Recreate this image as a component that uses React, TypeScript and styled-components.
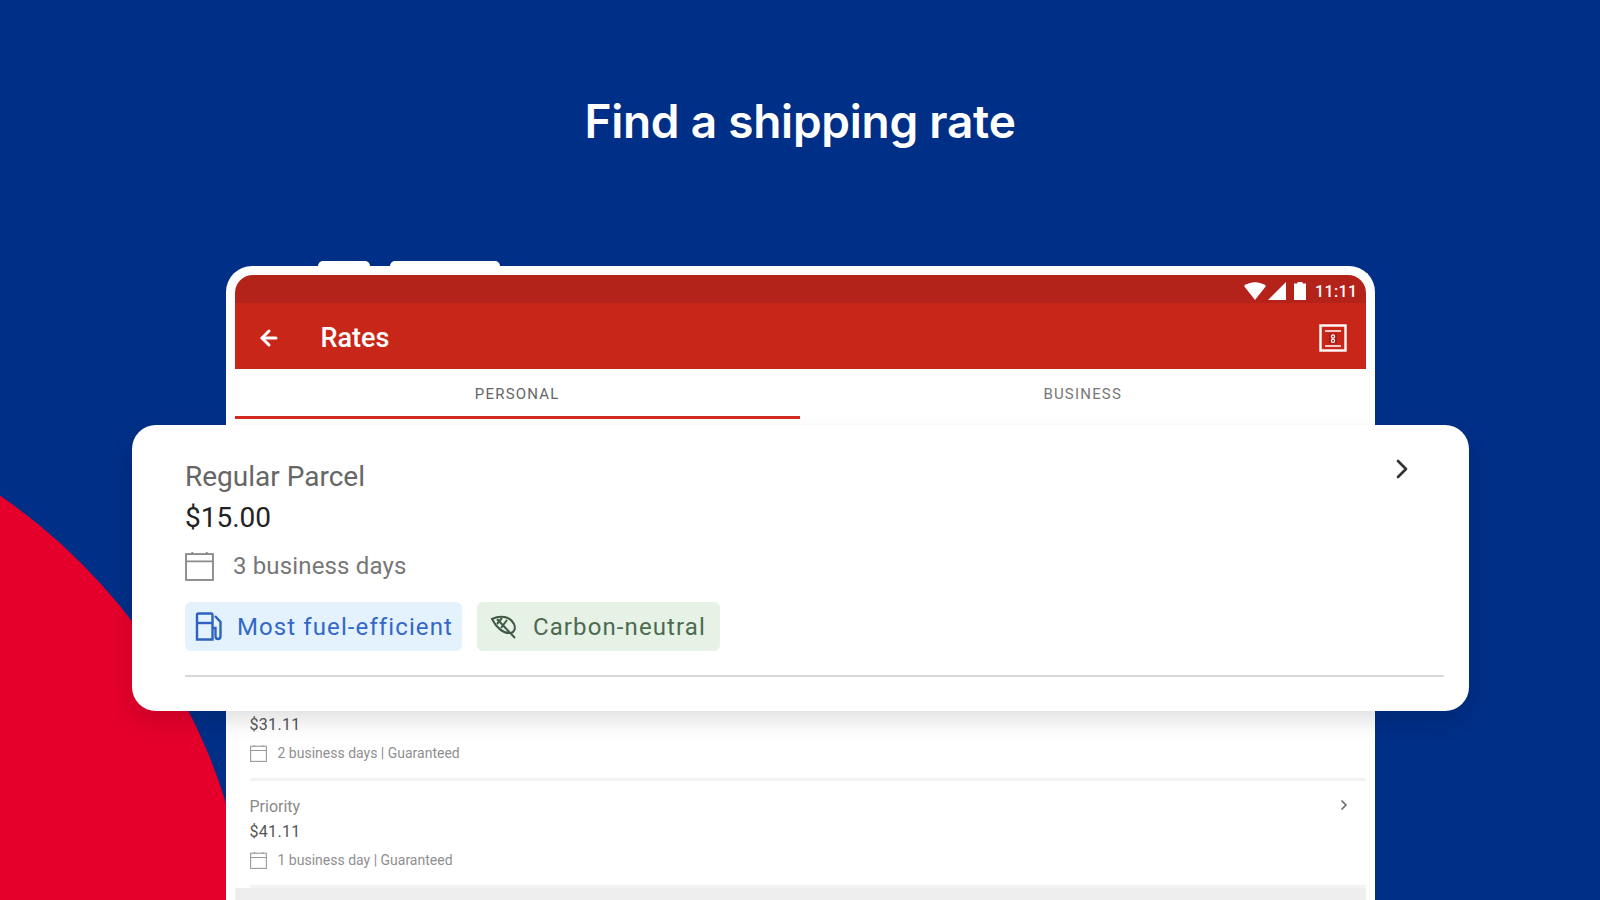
import React from 'react';
import styled, { createGlobalStyle } from 'styled-components';
import { ArrowLeft, ChevronRight } from 'lucide-react';

const GlobalStyle = createGlobalStyle`
  html, body {
    margin: 0;
    padding: 0;
  }
  body {
    font-family: Roboto, "Liberation Sans", sans-serif;
    background: #002f87;
  }
`;

const Page = styled.div`
  position: relative;
  width: 1600px;
  height: 900px;
  overflow: hidden;
  background: #002f87;
`;

const RedCircle = styled.div`
  position: absolute;
  left: -912px;
  top: 393px;
  width: 1164px;
  height: 1164px;
  border-radius: 50%;
  background: #e4002b;
`;

const Title = styled.h1`
  position: relative;
  margin: 0;
  padding-top: 91px;
  height: 266px;
  box-sizing: border-box;
  text-align: center;
  font-family: Inter, "Open Sans", sans-serif;
  font-size: 46px;
  font-weight: 600;
  line-height: 60px;
  letter-spacing: -0.25px;
  color: #fff;
`;

const Tablet = styled.div`
  position: relative;
  width: 1149px;
  height: 634px;
  margin: 0 auto;
  box-sizing: border-box;
  border: 9px solid #fff;
  border-bottom: 0;
  border-radius: 26px 26px 0 0;
  background: #fff;
`;

const HardwareButton = styled.span<{ $left: number; $width: number }>`
  position: absolute;
  top: -14px;
  left: ${p => p.$left}px;
  width: ${p => p.$width}px;
  height: 6px;
  border-radius: 5px 5px 0 0;
  background: #fff;
`;

const Screen = styled.div`
  height: 100%;
  overflow: hidden;
  border-radius: 18px 18px 0 0;
  background: #fff;
`;

const StatusBar = styled.div`
  height: 28px;
  box-sizing: border-box;
  padding: 4px 8px 0 0;
  display: flex;
  align-items: center;
  justify-content: flex-end;
  background: #b3231a;
`;

const StatusTime = styled.span`
  margin-left: 9px;
  font-size: 16px;
  font-weight: 500;
  letter-spacing: 0.4px;
  color: #fff;
`;

const Toolbar = styled.div`
  height: 66px;
  box-sizing: border-box;
  padding: 3px 19px 0 22px;
  display: flex;
  align-items: center;
  background: #c9261a;
  color: #fff;
`;

const ToolbarTitle = styled.span`
  margin-left: 40px;
  flex: 1;
  font-size: 27px;
  font-weight: 500;
`;

const Tabs = styled.div`
  display: flex;
  height: 50px;
`;

const Tab = styled.div<{ $active?: boolean }>`
  flex: 1;
  padding-top: 16px;
  box-sizing: border-box;
  text-align: center;
  font-size: 15px;
  letter-spacing: 1.2px;
  color: ${p => (p.$active ? '#666' : '#777')};
  border-bottom: 3px solid ${p => (p.$active ? '#d32a22' : 'transparent')};
`;

const RateList = styled.div`
  padding: 255px 0 0 15px;
`;

const RateRow = styled.div`
  position: relative;
  height: 90px;
  padding-top: 14px;
  border-bottom: 3px solid #f3f3f3;
`;

const RowLabel = styled.div`
  height: 24px;
  font-size: 16px;
  line-height: 24px;
  color: #8a8a8a;
`;

const RowPrice = styled.div`
  height: 26px;
  font-size: 16px;
  line-height: 26px;
  letter-spacing: 0.3px;
  color: #555;
`;

const RowMeta = styled.div`
  display: flex;
  align-items: center;
  gap: 11px;
  height: 30px;
  font-size: 14px;
  color: #8f8f8f;
`;

const RowChevron = styled.span`
  position: absolute;
  top: 16px;
  right: 14px;
  display: flex;
  color: #666;
`;

const GreyBand = styled.div`
  height: 20px;
  margin-left: -15px;
  background: #eee;
`;

const Card = styled.div`
  position: absolute;
  left: 132px;
  top: 425px;
  width: 1337px;
  height: 286px;
  box-sizing: border-box;
  padding: 37px 25px 0 53px;
  border-radius: 24px;
  background: #fff;
  box-shadow: 0 10px 22px rgba(0, 0, 0, 0.12);
`;

const CardHeader = styled.div`
  display: flex;
  justify-content: space-between;
  align-items: flex-start;
  padding-right: 26px;
`;

const CardName = styled.div`
  font-size: 28px;
  line-height: 30px;
  color: #666;
`;

const CardChevron = styled.span`
  display: flex;
  margin-top: -9px;
  color: #333;
`;

const CardPrice = styled.div`
  margin-top: 10px;
  font-size: 28px;
  line-height: 32px;
  color: #222;
`;

const CardMeta = styled.div`
  display: flex;
  align-items: center;
  gap: 19px;
  margin-top: 17px;
  height: 30px;
  font-size: 24px;
  letter-spacing: 0.15px;
  color: #777;
`;

const Chips = styled.div`
  display: flex;
  gap: 15px;
  margin-top: 21px;
`;

const Chip = styled.div<{ $bg: string; $fg: string; $pad: string }>`
  display: flex;
  align-items: center;
  gap: 14px;
  height: 49px;
  padding: ${p => p.$pad};
  box-sizing: border-box;
  border-radius: 6px;
  font-size: 24px;
  letter-spacing: 1.1px;
  background: ${p => p.$bg};
  color: ${p => p.$fg};
`;

const CardDivider = styled.div`
  height: 2px;
  margin-top: 24px;
  background: #d8d8d8;
`;

const WifiIcon = () => (
  <svg width="22" height="18" viewBox="0 0 22 18">
    <path d="M0 4 C6 -1 16 -1 22 4 L11 18 Z" fill="#fff" />
  </svg>
);

const SignalIcon = () => (
  <svg width="18" height="18" viewBox="0 0 18 18" style={{ marginLeft: 2 }}>
    <path d="M0 18 L18 0 V18 Z" fill="#fff" />
  </svg>
);

const BatteryIcon = () => (
  <svg width="12" height="18" viewBox="0 0 12 18" style={{ marginLeft: 8 }}>
    <path d="M3.5 0 H8.5 V1.5 H12 V18 H0 V1.5 H3.5 Z" fill="#fff" />
  </svg>
);

const RateCardIcon = () => (
  <svg width="28" height="28" viewBox="0 0 28 28" fill="none" stroke="#fff">
    <rect x="1.5" y="1.5" width="25" height="25" strokeWidth="2.4" />
    <path d="M6 7 H22 M6 22 H22" strokeWidth="1.6" />
    <rect x="10" y="9.5" width="8" height="10" fill="#a81c14" stroke="none" />
    <circle cx="14" cy="12.5" r="1.6" strokeWidth="1.2" />
    <circle cx="14" cy="16.8" r="1.6" strokeWidth="1.2" />
  </svg>
);

const CalendarIcon = ({ size, color }: { size: number; color: string }) => (
  <svg width={size} height={size} viewBox="0 0 28 28" fill="none" stroke={color} strokeWidth="1.8">
    <rect x="1" y="2" width="26" height="25" />
    <path d="M1 9 H27 M7 0 V3 M21 0 V3" />
  </svg>
);

const FuelIcon = () => (
  <svg width="28" height="29" viewBox="0 0 28 29" fill="none" stroke="#2f62c0" strokeWidth="2.4">
    <path d="M2 27.5 V3 Q2 1.5 3.5 1.5 H16 Q17.5 1.5 17.5 3 V27.5 Z" />
    <path d="M2 11 H17.5" />
    <path d="M20 4 L25.5 10 V24 Q25.5 27 23 27 Q20.5 27 20.5 24 V16 H17.5" />
  </svg>
);

const LeafIcon = () => (
  <svg width="29" height="26" viewBox="0 0 29 26" fill="none" stroke="#3f5a44" strokeWidth="2">
    <path d="M2 5 C10 1 20 2 24 10 C26 15 24 18 21 19 C13 20 6 13 2 5 Z" />
    <path d="M7 5 L25 24" />
    <path d="M12 4 L7 10 M17 6 L11 14" />
  </svg>
);

const App: React.FC = () => {
  return (
    <Page>
      <GlobalStyle />
      <RedCircle />
      <Title>Find a shipping rate</Title>
      <Tablet>
        <HardwareButton $left={83} $width={52} />
        <HardwareButton $left={155} $width={110} />
        <Screen>
          <StatusBar>
            <WifiIcon />
            <SignalIcon />
            <BatteryIcon />
            <StatusTime>11:11</StatusTime>
          </StatusBar>
          <Toolbar>
            <ArrowLeft size={24} strokeWidth={3} />
            <ToolbarTitle>Rates</ToolbarTitle>
            <RateCardIcon />
          </Toolbar>
          <Tabs>
            <Tab $active>PERSONAL</Tab>
            <Tab>BUSINESS</Tab>
          </Tabs>
          <RateList>
            <RateRow>
              <RowLabel />
              <RowPrice>$31.11</RowPrice>
              <RowMeta>
                <CalendarIcon size={17} color="#999" />
                2 business days | Guaranteed
              </RowMeta>
            </RateRow>
            <RateRow>
              <RowLabel>Priority</RowLabel>
              <RowPrice>$41.11</RowPrice>
              <RowMeta>
                <CalendarIcon size={17} color="#999" />
                1 business day | Guaranteed
              </RowMeta>
              <RowChevron>
                <ChevronRight size={16} strokeWidth={2.5} />
              </RowChevron>
            </RateRow>
            <GreyBand />
          </RateList>
        </Screen>
      </Tablet>
      <Card>
        <CardHeader>
          <CardName>Regular Parcel</CardName>
          <CardChevron>
            <ChevronRight size={32} strokeWidth={2} />
          </CardChevron>
        </CardHeader>
        <CardPrice>$15.00</CardPrice>
        <CardMeta>
          <CalendarIcon size={29} color="#8a8a8a" />
          3 business days
        </CardMeta>
        <Chips>
          <Chip $bg="#e3f2fd" $fg="#3367c8" $pad="0 9px 0 10px">
            <FuelIcon />
            Most fuel-efficient
          </Chip>
          <Chip $bg="#e6f2e6" $fg="#4d6a50" $pad="0 14px 0 13px">
            <LeafIcon />
            Carbon-neutral
          </Chip>
        </Chips>
        <CardDivider />
      </Card>
    </Page>
  );
};

export default App;
